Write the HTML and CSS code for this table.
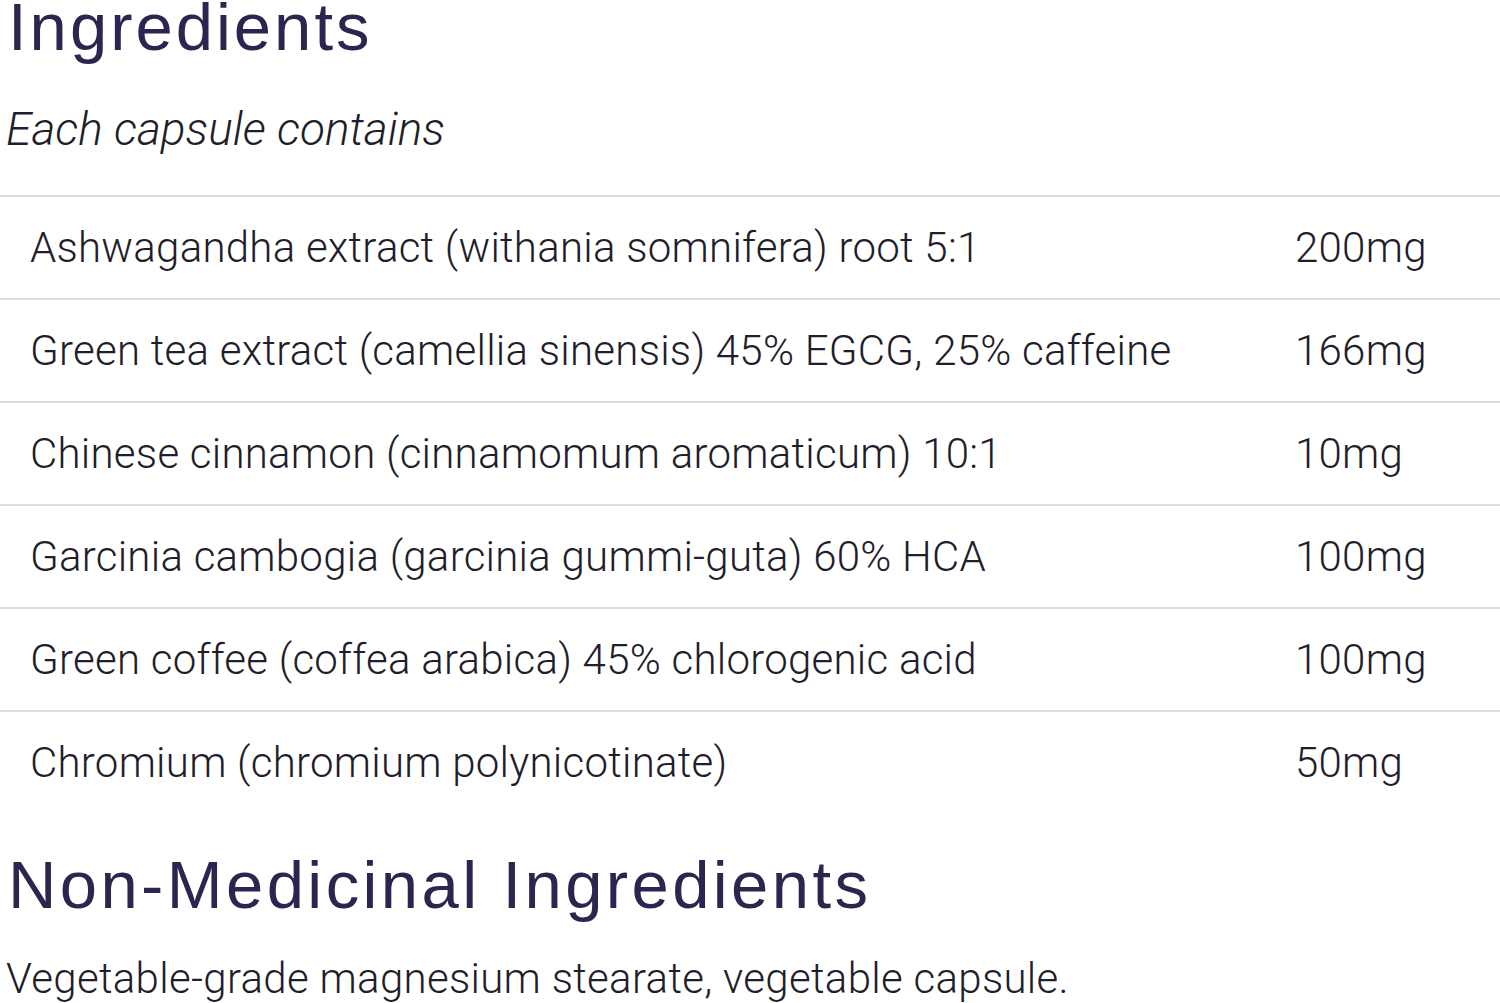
FILE: index.html
```html
<!DOCTYPE html>
<html lang="en">
<head>
    <meta charset="UTF-8">
    <meta name="viewport" content="width=device-width, initial-scale=1.0">
    <title>Ingredients</title>

    <link rel="stylesheet" href="styles.css">
</head>
<body>

    <section class="panel">
        <h1 class="title">Ingredients</h1>
        <p class="lead">Each capsule contains</p>

        <div class="rows">
            <div class="row">
                <span class="name">Ashwagandha extract (withania somnifera) root 5:1</span>
                <span class="dose">200mg</span>
            </div>
            <div class="row">
                <span class="name">Green tea extract (camellia sinensis) 45% EGCG, 25% caffeine</span>
                <span class="dose">166mg</span>
            </div>
            <div class="row">
                <span class="name">Chinese cinnamon (cinnamomum aromaticum) 10:1</span>
                <span class="dose">10mg</span>
            </div>
            <div class="row">
                <span class="name">Garcinia cambogia (garcinia gummi-guta) 60% HCA</span>
                <span class="dose">100mg</span>
            </div>
            <div class="row">
                <span class="name">Green coffee (coffea arabica) 45% chlorogenic acid</span>
                <span class="dose">100mg</span>
            </div>
            <div class="row">
                <span class="name">Chromium (chromium polynicotinate)</span>
                <span class="dose">50mg</span>
            </div>
        </div>

        <h2 class="title title-wide">Non-Medicinal Ingredients</h2>
        <p class="note">Vegetable-grade magnesium stearate, vegetable capsule.</p>
    </section>

</body>
</html>
```

FILE: styles.css
```css
body {
    background: #fff;
    font-family: Roboto, "Liberation Sans", sans-serif;
    font-weight: 300;
    color: #1f1e2c;
    padding: 0;
    margin: 0;
    overflow: hidden;
}

.panel {
    width: 1500px;
}

.title {
    font-family: "Liberation Sans", Arial, sans-serif;
    font-weight: 400;
    font-size: 67px;
    line-height: 54px;
    letter-spacing: 3px;
    color: #2b2550;
    margin: 0;
    padding-left: 8px;
}

.title-wide {
    margin-top: 45px;
    letter-spacing: 3.4px;
}

.lead {
    font-style: italic;
    font-size: 46px;
    line-height: 54px;
    margin: 48px 0 39px;
    padding-left: 6px;
}

.row {
    display: grid;
    grid-template-columns: 1265px 1fr;
    padding-left: 30px;
    border-top: 2px solid #dcdcdc;
    font-size: 42px;
    line-height: 101px;
    letter-spacing: 0.25px;
    white-space: nowrap;
}

.note {
    font-size: 42px;
    line-height: 50px;
    letter-spacing: 0.3px;
    margin: 42px 0 0;
    padding-left: 6px;
}
```
